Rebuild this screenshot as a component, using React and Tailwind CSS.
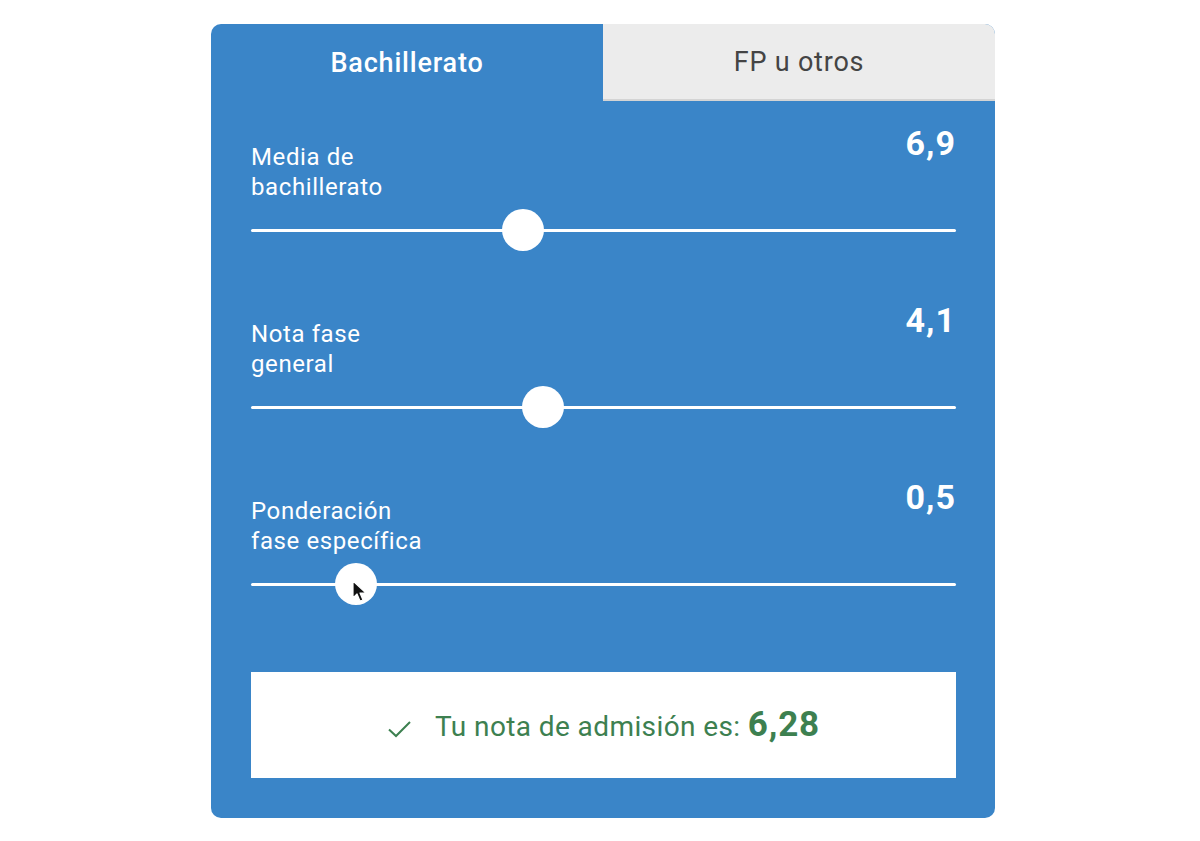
import { useState } from "react";

const SLIDERS = [
  { label: ["Media de", "bachillerato"], value: 6.9, pos: 0.386 },
  { label: ["Nota fase", "general"], value: 4.1, pos: 0.414 },
  { label: ["Ponderación", "fase específica"], value: 0.5, pos: 0.149, cursor: true },
];

function Cursor() {
  return (
    <svg width="16" height="24" viewBox="0 0 16 24" className="absolute left-[-4px] top-[-4px]">
      <path d="M1 1 L1 18 L5 14 L8 21 L11 20 L8 13 L14 13 Z" fill="#111" stroke="#fff" strokeWidth="1.2" strokeLinejoin="round" />
    </svg>
  );
}

function Slider({ item }) {
  return (
    <div>
      <div className="flex justify-between items-start">
        <div className="mt-[18px] text-[24px] leading-[30px] tracking-[0.6px] text-white">
          {item.label.map((l) => (
            <div key={l}>{l}</div>
          ))}
        </div>
        <div className="text-[34px] leading-[38px] font-bold tracking-[1px] text-white">
          {item.value.toFixed(1).replace(".", ",")}
        </div>
      </div>
      <div className="relative h-[42px] mt-[7px]">
        <div className="absolute left-0 right-0 top-[20px] h-[3px] bg-white rounded-full" />
        <div
          className="absolute top-0 w-[42px] h-[42px] -ml-[21px] rounded-full bg-white"
          style={{ left: `${item.pos * 100}%` }}
        >
          {item.cursor && (
            <div className="absolute left-[21px] top-[21px]">
              <Cursor />
            </div>
          )}
        </div>
      </div>
    </div>
  );
}

export default function App() {
  const [tab, setTab] = useState(0);
  return (
    <div className="min-h-[841px] bg-white flex justify-center pt-[24px] pl-[6px] font-['Roboto',sans-serif]">
      <div className="w-[784px] h-[794px] bg-[#3a85c8] rounded-[10px] overflow-hidden flex flex-col">
        <div className="flex h-[79px]">
          <button
            onClick={() => setTab(0)}
            className="flex-1 flex items-center justify-center pt-[2px] text-[27px] font-medium tracking-[0.8px] text-white"
          >
            Bachillerato
          </button>
          <button
            onClick={() => setTab(1)}
            className="flex-1 flex items-center justify-center pt-[2px] text-[27px] tracking-[0.8px] text-[#444] bg-[#ececec] border-b-[2px] border-[#d4d4d4]"
          >
            FP u otros
          </button>
        </div>
        <div className="pl-[40px] pr-[39px] pt-[23px] pb-[40px] flex flex-col flex-1">
          <div className="flex flex-col gap-[50px]">
            {SLIDERS.map((s) => (
              <Slider key={s.label[0]} item={s} />
            ))}
          </div>
          <div className="mt-[67px] h-[106px] bg-white flex items-center justify-center gap-[22px] text-[#3d8050]">
            <svg width="26" height="24" viewBox="0 0 26 24" className="mt-[8px]">
              <path d="M2 12.5 L9 19 L23 5" fill="none" stroke="#3d8050" strokeWidth="2" />
            </svg>
            <span className="text-[28px] tracking-[0.4px]">
              Tu nota de admisión es: <span className="font-bold text-[35px] tracking-[0.8px]">6,28</span>
            </span>
          </div>
        </div>
      </div>
    </div>
  );
}
